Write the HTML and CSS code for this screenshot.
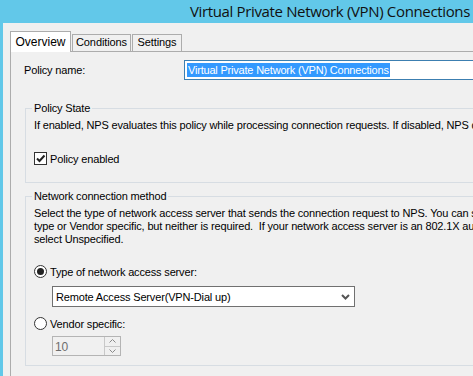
FILE: index.html
```html
<!DOCTYPE html>
<html>
<head>
    <title>Virtual Private Network (VPN) Connections</title>
    <link rel="stylesheet" href="styles.css">
</head>
<body>

<div class="titlebar">
    <span class="title">Virtual Private Network (VPN) Connections</span>
</div>

<div class="client">
    <div class="tabs">
        <div class="tab active">Overview</div>
        <div class="tab conditions">Conditions</div>
        <div class="tab settings">Settings</div>
    </div>

    <div class="panel">
        <div class="name-row">
            <label class="name-label">Policy name:</label>
            <div class="name-input"><span class="selected">Virtual Private Network (VPN) Connections</span></div>
        </div>

        <fieldset class="group state">
            <legend>Policy State</legend>
            <p class="desc">If enabled, NPS evaluates this policy while processing connection requests. If disabled, NPS does not evaluate this policy.</p>
            <label class="check">
                <span class="box">
                    <svg width="11" height="11" viewBox="0 0 11 11"><path d="M2 5.5 L4.5 8 L9.5 2.5" fill="none" stroke="#222" stroke-width="2"/></svg>
                </span>
                Policy enabled
            </label>
        </fieldset>

        <fieldset class="group method">
            <legend>Network connection method</legend>
            <p class="desc">Select the type of network access server that sends the connection request to NPS. You can select either a network access server<br>type or Vendor specific, but neither is required.&nbsp; If your network access server is an 802.1X authenticating switch or wireless access point,<br>select Unspecified.</p>
            <label class="radio"><span class="dot on"></span>Type of network access server:</label>
            <div class="select">
                <span>Remote Access Server(VPN-Dial up)</span>
                <svg width="9" height="6" viewBox="0 0 9 6"><path d="M1 1 L4.5 4.5 L8 1" fill="none" stroke="#555" stroke-width="2"/></svg>
            </div>
            <label class="radio second"><span class="dot"></span>Vendor specific:</label>
            <div class="spin">
                <span class="spin-value">10</span>
                <span class="spin-buttons">
                    <span class="spin-btn"><svg width="7" height="4" viewBox="0 0 7 4"><path d="M0.5 3.5 L3.5 0.5 L6.5 3.5" fill="none" stroke="#8a8a8a" stroke-width="1"/></svg></span>
                    <span class="spin-btn"><svg width="7" height="4" viewBox="0 0 7 4"><path d="M0.5 0.5 L3.5 3.5 L6.5 0.5" fill="none" stroke="#8a8a8a" stroke-width="1"/></svg></span>
                </span>
            </div>
        </fieldset>
    </div>
</div>

</body>
</html>
```

FILE: styles.css
```css
* {
    box-sizing: border-box;
}

body {
    margin: 0;
    width: 473px;
    height: 376px;
    overflow: hidden;
    background-color: #62c8e9;
    font-family: "Liberation Sans", Arial, sans-serif;
    font-size: 11px;
    letter-spacing: -0.16px;
    color: #000;
}

.titlebar {
    height: 23px;
    text-align: right;
    padding-right: 3px;
    white-space: nowrap;
}

.title {
    font-family: "Open Sans", sans-serif;
    font-size: 15px;
    letter-spacing: -0.35px;
    line-height: 22px;
    color: #111;
}

.client {
    margin-left: 3px;
    width: 560px;
    height: 353px;
    background-color: #f0f0f0;
    padding: 8px 0 0 7px;
}

.tabs {
    display: flex;
    align-items: flex-end;
    height: 21px;
    position: relative;
    z-index: 1;
}

.tab {
    height: 17px;
    margin-bottom: 1px;
    border: 1px solid #acacac;
    border-bottom: none;
    background-color: #f0f0f0;
    line-height: 15px;
    font-size: 11px;
    letter-spacing: -0.1px;
    text-align: center;
}

.tab.conditions {
    width: 59px;
    margin-left: 1px;
}

.tab.settings {
    width: 50px;
    margin-left: 1px;
}

.tab.active {
    height: 21px;
    margin-bottom: 0;
    width: 61px;
    background-color: #fff;
    line-height: 20px;
    font-size: 12px;
    letter-spacing: 0;
}

.panel {
    margin-top: -1px;
    height: 400px;
    border: 1px solid #acacac;
    padding: 8px 0 0 13px;
}

.name-row {
    display: flex;
    align-items: center;
    height: 20px;
    white-space: nowrap;
}

.name-label {
    width: 160px;
}

.name-input {
    flex: 1;
    height: 20px;
    border: 1px solid #3c7fb1;
    background-color: #fff;
    padding: 2px 0 0 2px;
}

.selected {
    display: inline-block;
    background-color: #3399ff;
    color: #fff;
    line-height: 14px;
    padding: 0 1px;
    letter-spacing: -0.2px;
}

.group {
    margin: 22px 0 0 1px;
    border: 1px solid #d7dde3;
    padding: 0 0 0 8px;
    white-space: nowrap;
}

.group legend {
    padding: 0 2px;
    margin-left: -2px;
    line-height: 13px;
}

.desc {
    margin: 4px 0 0 0;
    line-height: 13px;
}

.check {
    display: flex;
    align-items: center;
    margin: 20px 0 17px 0;
    height: 13px;
}

.box {
    width: 13px;
    height: 13px;
    border: 1px solid #333;
    background-color: #fff;
    margin-right: 3px;
}

.box svg {
    display: block;
}

.method {
    margin-top: 7px;
    height: 176px;
}

.radio {
    display: flex;
    align-items: center;
    height: 13px;
    margin-top: 19px;
}

.radio.second {
    margin-top: 10px;
}

.dot {
    width: 13px;
    height: 13px;
    border: 1px solid #333;
    border-radius: 50%;
    background-color: #fff;
    margin-right: 3px;
    position: relative;
}

.dot.on::after {
    content: "";
    position: absolute;
    left: 2px;
    top: 2px;
    width: 7px;
    height: 7px;
    border-radius: 50%;
    background-color: #222;
}

.select {
    display: flex;
    align-items: center;
    justify-content: space-between;
    width: 303px;
    height: 21px;
    margin: 8px 0 0 18px;
    border: 1px solid #707070;
    background-color: #fff;
    padding: 0 4px 0 3px;
}

.spin {
    display: flex;
    width: 69px;
    height: 20px;
    margin: 6px 0 0 18px;
    border: 1px solid #b4b4b4;
    background-color: #f0f0f0;
}

.spin-value {
    flex: 1;
    color: #6d6d6d;
    padding: 3px 0 0 2px;
    font-size: 12px;
}

.spin-buttons {
    display: flex;
    flex-direction: column;
    width: 16px;
    border-left: 1px solid #c8c8c8;
}

.spin-btn {
    flex: 1;
    display: flex;
    align-items: center;
    justify-content: center;
}

.spin-btn + .spin-btn {
    border-top: 1px solid #c8c8c8;
}

.spin-btn svg {
    display: block;
}
```
